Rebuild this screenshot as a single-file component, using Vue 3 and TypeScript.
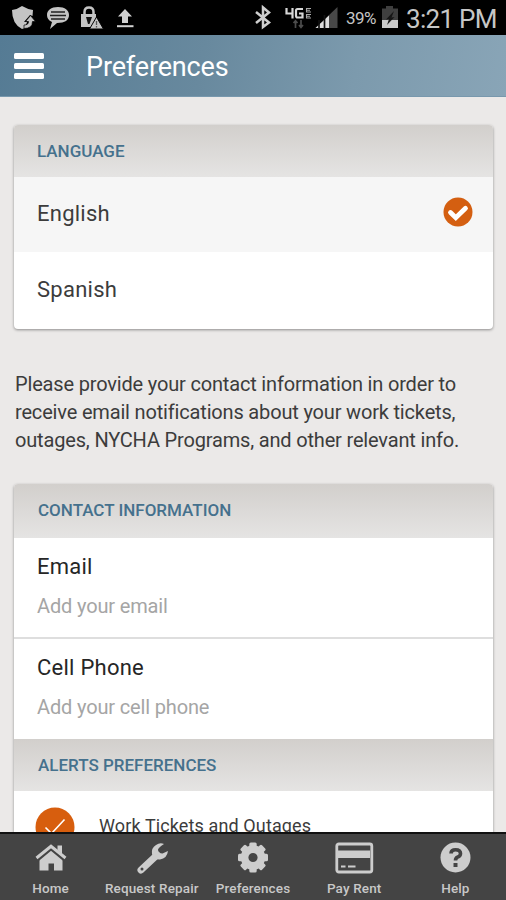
<script setup lang="ts">
import { ref } from 'vue'

interface Tab {
  id: string
  label: string
}

const languages: string[] = ['English', 'Spanish']
const selected = ref<string>('English')

const fields = [
  { label: 'Email', hint: 'Add your email' },
  { label: 'Cell Phone', hint: 'Add your cell phone' },
]

const tabs: Tab[] = [
  { id: 'home', label: 'Home' },
  { id: 'repair', label: 'Request Repair' },
  { id: 'prefs', label: 'Preferences' },
  { id: 'pay', label: 'Pay Rent' },
  { id: 'help', label: 'Help' },
]
const teeth: number[] = [0, 45, 90, 135, 180, 225, 270, 315]
</script>

<template>
  <div class="screen">
    <div class="status">
      <svg class="status-left" width="140" height="35" viewBox="0 0 140 35">
        <path d="M12 10 Q18 9 22 6 Q27 9 33 10 L32.500 16 L30 15 L24 22 L27 22 L25 28 L22 29 Q12 24 12 10Z" fill="#c4c4c4" />
        <path d="M24 28.500 Q32.500 28.500 32.500 21.500 L35.500 21.500 L30.500 15.500 L25.500 21.500 L28.500 21.500 Q28.500 25 24 25Z" fill="#c4c4c4" stroke="#000" stroke-width=".7" />
        <path d="M58 7 C65 7 69 10.500 69 15 C69 20 65 23 57 23 L50 29 L52 22 C48.500 20.500 47 18 47 15 C47 10.500 51 7 58 7Z" fill="#c4c4c4" />
        <path d="M51 12H65M50 15.500H66M51 19H65" stroke="#222" stroke-width="1.300" />
        <path d="M84.500 15V12Q84.500 7.500 89 7.500Q93.500 7.500 93.500 12V15" fill="none" stroke="#c4c4c4" stroke-width="2.500" />
        <path d="M81 14H96V27H81Z" fill="#c4c4c4" />
        <path d="M86 17H92L89.500 24H88Z" fill="#111" />
        <path d="M96.500 17L103.500 29H89.500Z" fill="#c4c4c4" stroke="#000" stroke-width="1" />
        <path d="M96.500 21V25M96.500 26V27.500" stroke="#555" stroke-width="1.300" />
        <path d="M125 9L132 16.500H128V23H122V16.500H118Z" fill="#d2d2d2" />
        <path d="M117 26.200H133.500" stroke="#d2d2d2" stroke-width="2" />
      </svg>
      <div class="status-right">
        <svg width="84" height="35" viewBox="0 0 84 35">
          <path d="M2 12L15 22.500L9 27V7.500L15 12.500L2 23" fill="none" stroke="#cfcfcf" stroke-width="2.500" />
          <path d="M32.500 8V13.500H39.500M38.500 8V18.500M49 9H43.500Q42 9 42 11V15.500Q42 17.500 43.500 17.500H48.500V13.500H45" fill="none" stroke="#d8d8d8" stroke-width="2.200" />
          <path d="M57 8.500H52.500V12H57M57 14.500H52.500V18H57M52.500 10.200H56M52.500 16.200H56" fill="none" stroke="#aaa" stroke-width="1.100" />
          <path d="M41.500 21V28M39.500 23L41.500 20.800L43.500 23M47 20V27M45 25L47 27.500L49 25" fill="none" stroke="#4c4c4c" stroke-width="1.700" />
          <path d="M83.500 7V28H61.500Z" fill="#484848" />
          <path d="M61.500 28L75 15.500V28Z" fill="#dedede" />
          <path d="M65 20V29M70.500 15V29" stroke="#111" stroke-width="1.700" />
        </svg>
        <span class="percent">39%</span>
        <svg class="battery" width="18" height="35" viewBox="0 0 18 35">
          <path d="M5 6H12V8.500H17V28H1V8.500H5Z" fill="#3f3f3f" />
          <path d="M1 20H17V28H1Z" fill="#c9c9c9" />
          <path d="M13 11L5 19.500L8 19L6 25L13.500 17L10.500 17.500Z" fill="#161616" />
        </svg>
        <span class="clock">3:21 PM</span>
      </div>
    </div>

    <header class="bar">
      <div class="burger"><i></i><i></i><i></i></div>
      <h1>Preferences</h1>
    </header>

    <main class="content">
      <section class="card">
        <h2 class="language-title">LANGUAGE</h2>
        <div
          v-for="language in languages"
          :key="language"
          class="option"
          :class="{ active: language === selected }"
          @click="selected = language"
        >
          <span>{{ language }}</span>
          <svg v-if="language === selected" width="30" height="30" viewBox="0 0 30 30">
            <circle cx="15" cy="15" r="14.500" fill="#d45f11" />
            <path d="M7.500 15.500L12.800 20.700L22.500 11.300" fill="none" stroke="#fff" stroke-width="4.800" stroke-linecap="round" />
          </svg>
        </div>
      </section>

      <p class="note">
        Please provide your contact information in order to<br />receive email notifications about your work tickets,<br />outages, NYCHA Programs, and other relevant info.
      </p>

      <section class="card contact">
        <h2 class="contact-title">CONTACT INFORMATION</h2>
        <div v-for="field in fields" :key="field.label" class="field">
          <div class="label">{{ field.label }}</div>
          <div class="hint">{{ field.hint }}</div>
        </div>
        <h2 class="alerts-title">ALERTS PREFERENCES</h2>
        <div class="alert">
          <svg width="40" height="40" viewBox="0 0 40 40">
            <circle cx="20" cy="20" r="19.500" fill="#d75e0e" />
            <path d="M10.500 20.500L16.500 26.500L29.500 12.500" fill="none" stroke="#fff" stroke-width="1.600" />
          </svg>
          <span>Work Tickets and Outages</span>
        </div>
      </section>
    </main>

    <nav class="tabs">
      <div v-for="tab in tabs" :key="tab.id" class="tab" :class="tab.id">
        <svg width="40" height="34" viewBox="0 0 40 34">
          <template v-if="tab.id === 'home'">
            <path d="M8.500 19L20 9.500L31.500 19V30.500H23V23.500H17.500V30.500H8.500Z" fill="#cdcdcd" />
            <path d="M5.500 19.500L20 7.500L34.500 19.500" fill="none" stroke="#444" stroke-width="5" />
            <path d="M26.500 5.500H31V14L26.500 10Z" fill="#cdcdcd" />
            <path d="M5.500 18L20 6.300L34.500 18" fill="none" stroke="#cdcdcd" stroke-width="3" />
          </template>
          <template v-else-if="tab.id === 'repair'">
            <path d="M25 15L9 30" fill="none" stroke="#cdcdcd" stroke-width="7" stroke-linecap="round" />
            <path d="M32 4Q28 2 24 5Q19 8 20 14Q22 20 28 19.500Q35 18.500 36 11L30.500 13.500Q26 13.500 26 9.500Q27 7 32 4Z" fill="#cdcdcd" />
            <circle cx="10" cy="29" r="1.500" fill="#444" />
          </template>
          <template v-else-if="tab.id === 'prefs'">
            <rect v-for="angle in teeth" :key="angle" x="16.300" y="2.500" width="7.400" height="8" rx="1.500" fill="#cdcdcd" :transform="`rotate(${angle} 20 17.500)`" />
            <circle cx="20" cy="17.500" r="8.400" fill="none" stroke="#cdcdcd" stroke-width="7.600" />
          </template>
          <template v-else-if="tab.id === 'pay'">
            <rect x="2.800" y="4" width="35" height="28" rx="2" fill="none" stroke="#cdcdcd" stroke-width="2.800" />
            <path d="M4 10.500H36V18H4Z" fill="#cdcdcd" />
            <path d="M7 26.500H11.500M14 26.500H21.500" stroke="#cdcdcd" stroke-width="2.200" />
          </template>
          <template v-else>
            <circle cx="20.500" cy="17.500" r="15" fill="#cdcdcd" />
            <path d="M16 13.500Q16 9.700 20.500 9.700Q25.500 9.700 25.500 13.500Q25.500 16 22.500 17.200Q20.500 18.200 20.500 20.500" fill="none" stroke="#444" stroke-width="3.600" />
            <path d="M18.500 23H22.500V27H18.500Z" fill="#444" />
          </template>
        </svg>
        <span>{{ tab.label }}</span>
      </div>
    </nav>
  </div>
</template>

<style>
body {
  margin: 0;
}
</style>

<style scoped>
.screen {
  width: 506px;
  height: 900px;
  display: flex;
  flex-direction: column;
  overflow: hidden;
  background: #ebe9e8;
  font-family: Roboto, "Liberation Sans", sans-serif;
  color: #3c3c3c;
}
.status {
  height: 35px;
  flex: none;
  display: flex;
  justify-content: space-between;
  background: #000;
  color: #c6c6c6;
}
.status-right {
  display: flex;
  align-items: center;
  width: 252px;
}
.percent {
  width: 35px;
  margin-left: 8px;
  padding-top: 2px;
  font-size: 17px;
  letter-spacing: -0.5px;
  line-height: 37px;
}
.clock {
  margin-left: 7px;
  padding-top: 2px;
  font-size: 26px;
  letter-spacing: -0.7px;
  line-height: 38px;
  white-space: nowrap;
}
.bar {
  box-sizing: border-box;
  height: 62px;
  flex: none;
  display: flex;
  align-items: center;
  padding: 0 14px;
  background: linear-gradient(100deg, #557b94 0%, #68899e 40%, #7c9aad 70%, #89a5b7 100%);
  border-bottom: 1px solid #7898ad;
}
.burger {
  display: flex;
  flex-direction: column;
  gap: 4px;
  width: 30px;
}
.burger i {
  height: 6px;
  border-radius: 1.5px;
  background: #fff;
}
h1 {
  margin: 2px 0 0 42px;
  font-size: 27px;
  font-weight: 400;
  line-height: 32px;
  letter-spacing: -0.15px;
  color: #fff;
}
.content {
  flex: 1;
  min-height: 0;
  overflow: hidden;
  padding: 28px 13px 0 14px;
}
.card {
  background: #fff;
  border-radius: 4px;
  overflow: hidden;
  box-shadow: 0 1px 3px rgba(0, 0, 0, 0.4);
}
h2 {
  box-sizing: border-box;
  height: 52px;
  margin: 0;
  padding: 0 24px;
  font-size: 17px;
  font-weight: 500;
  line-height: 52px;
  color: #45718d;
  background: linear-gradient(#d2cfcc, #e5e4e3);
}
.language-title {
  padding-left: 23px;
}
.option {
  box-sizing: border-box;
  height: 77px;
  display: flex;
  align-items: center;
  justify-content: space-between;
  padding: 0 20px 2px 23px;
  font-size: 22px;
  letter-spacing: 0.25px;
}
.option.active {
  height: 75px;
  background: #f6f6f6;
}
.option svg {
  margin-bottom: 3px;
}
.note {
  margin: 41px 0 30px;
  padding-left: 1px;
  font-size: 20px;
  line-height: 28px;
  letter-spacing: -0.17px;
  white-space: nowrap;
}
.contact-title {
  height: 54px;
  line-height: 53px;
}
.field {
  box-sizing: border-box;
  height: 99px;
  padding: 15px 23px 0;
}
.field + .field {
  height: 102px;
  border-top: 2px solid #dedede;
}
.label {
  font-size: 22px;
  line-height: 28px;
  letter-spacing: 0.25px;
  color: #262626;
}
.hint {
  margin-top: 11px;
  font-size: 20px;
  line-height: 28px;
  letter-spacing: -0.15px;
  color: #a5a5a5;
}
.alert {
  height: 72px;
  display: flex;
  align-items: flex-start;
  gap: 24px;
  padding: 16px 21px 0;
}
.alert span {
  font-size: 18px;
  line-height: 37px;
  letter-spacing: 0.12px;
}
.tabs {
  box-sizing: border-box;
  height: 68px;
  flex: none;
  display: grid;
  grid-template-columns: repeat(5, 1fr);
  border-top: 2px solid #111;
  background: #444;
}
.tab {
  display: flex;
  flex-direction: column;
  align-items: center;
  padding-top: 6px;
  font-size: 13.5px;
  font-weight: 500;
  line-height: 16px;
  letter-spacing: 0.15px;
  color: #c8c8c8;
  white-space: nowrap;
}
.tab span {
  margin-top: 6px;
}
</style>
